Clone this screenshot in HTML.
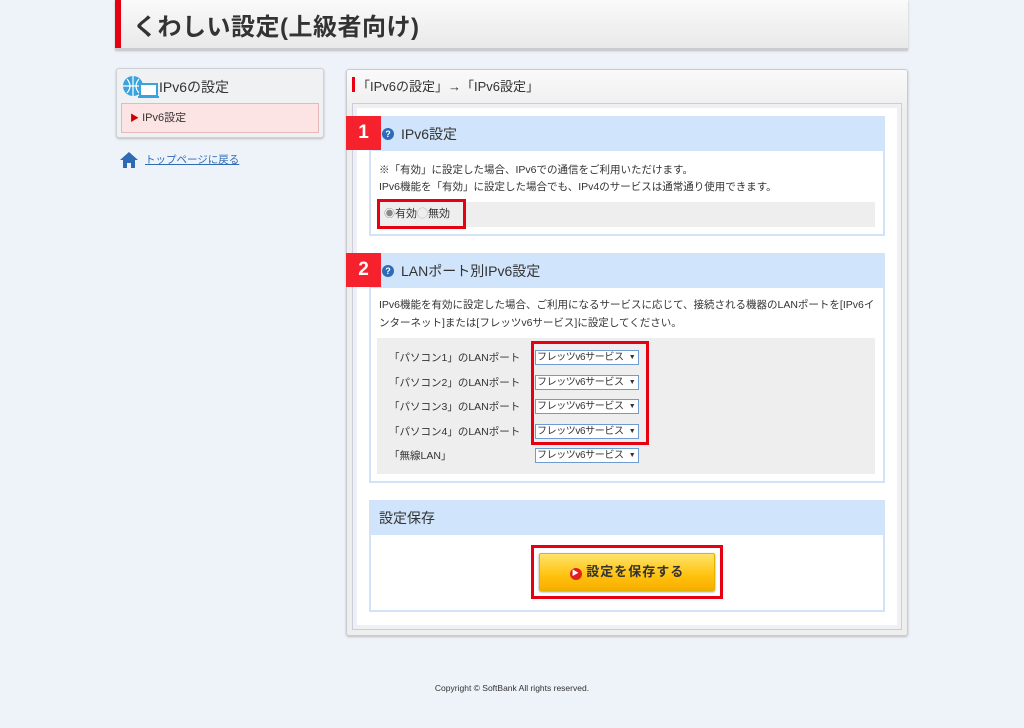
<!DOCTYPE html>
<html><head><meta charset="utf-8"><style>
*{margin:0;padding:0;box-sizing:border-box}
body{width:1024px;height:728px;background:#eef3f9;font-family:"Liberation Sans","Noto Sans CJK JP",sans-serif;color:#333;position:relative;overflow:hidden}
.a{position:absolute}
.hdr{left:115px;top:0;width:793px;height:50px;background:linear-gradient(#fafafa,#e9e9e9);border-bottom:2px solid #c9ccd0;box-shadow:0 1px 2px #bbb}
.hdr .bar{left:0;top:0;width:6px;height:48px;background:#e60012}
.hdr .t{left:18px;top:7px;font-size:24px;font-weight:bold;color:#333;letter-spacing:0.5px}
.lbox{left:116px;top:68px;width:208px;height:70px;background:#f0f1f3;border:1px solid #cdd2d8;border-radius:3px;box-shadow:0 1px 2px #bbb}
.panel{left:346px;top:69px;width:562px;height:567px;background:linear-gradient(#fafafa,#eee 40px);border:1px solid #c8ccd2;border-radius:3px;box-shadow:0 1px 2px #bbb}
.inner{left:352px;top:103px;width:550px;height:527px;background:#fff;border:1px solid #ccd;box-shadow:inset 0 0 0 4px #eef0f3}
.sec{border:2px solid #d3e3f7;background:#fff}
.sh{background:#d0e4fb;height:33px;font-size:14px;line-height:33px;color:#333}
.num{width:35px;height:34px;background:#f5222d;color:#fff;font-weight:bold;font-size:19px;text-align:center;line-height:34px}
.q{width:12px;height:12px;border-radius:50%;background:#2d6bb8;color:#fff;font-size:9px;font-weight:bold;text-align:center;line-height:12px}
.s12{font-size:10.5px;color:#333}
.sel{width:104px;height:15px;border:1px solid #6f9bd1;background:#fff;font-size:10px;letter-spacing:-0.4px;line-height:13px;padding-left:1px;white-space:nowrap;overflow:hidden}
.sel:after{content:"▼";position:absolute;right:0;top:0;width:12px;text-align:center;background:#fff;font-size:7px}
.red{border:3px solid #e60012}
</style></head><body>
<div class="a hdr"><div class="a bar"></div><div class="a t">くわしい設定(上級者向け)</div></div>

<div class="a lbox">
 <svg class="a" style="left:4px;top:4px" width="40" height="28"><circle cx="12" cy="13" r="10" fill="#3aa2dc"/><path d="M2 13h20M12 3v20M6 6q6 7 0 14M18 6q-6 7 0 14" stroke="#fff" stroke-width="1.2" fill="none"/><rect x="19" y="11" width="17" height="12" fill="#fff" stroke="#3aa2dc" stroke-width="2"/><rect x="17" y="23" width="21" height="2" fill="#3aa2dc"/></svg>
 <div class="a" style="left:42px;top:8px;font-size:14px">IPv6の設定</div>
 <div class="a" style="left:4px;top:34px;width:198px;height:30px;background:#fde4e4;border:1px solid #e3b9b9;font-size:11px;line-height:28px;padding-left:8px"><span style="color:#c00;font-size:9px">▶</span> IPv6設定</div>
</div>
<svg class="a" style="left:119px;top:151px" width="20" height="18"><path d="M10 1L1 9h3v8h4v-5h4v5h4V9h3z" fill="#2f6bb5"/></svg>
<div class="a" style="left:145px;top:152px;font-size:10.5px;color:#2f6bb5;text-decoration:underline">トップページに戻る</div>

<div class="a panel"></div>
<div class="a" style="left:352px;top:77px;width:3px;height:15px;background:#e60012"></div>
<div class="a" style="left:357px;top:76px;font-size:13px">「IPv6の設定」→「IPv6設定」</div>
<div class="a inner"></div>

<div class="a sec" style="left:369px;top:116px;width:516px;height:120px">
 <div class="sh" style="padding-left:30px">IPv6設定</div>
 <div class="a s12" style="left:8px;top:44px;line-height:17px">※「有効」に設定した場合、IPv6での通信をご利用いただけます。<br>IPv6機能を「有効」に設定した場合でも、IPv4のサービスは通常通り使用できます。</div>
 <div class="a" style="left:6px;top:84px;width:498px;height:25px;background:#eee"></div>
 <div class="a red" style="left:6px;top:81px;width:89px;height:30px;font-size:11px;line-height:24px;padding-left:4px"><span style="color:#888">◉</span>有効<span style="color:#aaa">◯</span>無効</div>
</div>
<div class="a num" style="left:346px;top:116px">1</div>
<div class="a q" style="left:382px;top:128px">?</div>

<div class="a sec" style="left:369px;top:253px;width:516px;height:230px">
 <div class="sh" style="padding-left:30px">LANポート別IPv6設定</div>
 <div class="a s12" style="left:8px;top:41px;line-height:18px">IPv6機能を有効に設定した場合、ご利用になるサービスに応じて、接続される機器のLANポートを[IPv6インターネット]または[フレッツv6サービス]に設定してください。</div>
 <div class="a" style="left:6px;top:83px;width:498px;height:136px;background:#eee"></div>
 <div class="a s12" style="left:18px;top:91px;line-height:24.6px">「パソコン1」のLANポート<br>「パソコン2」のLANポート<br>「パソコン3」のLANポート<br>「パソコン4」のLANポート<br>「無線LAN」</div>
 <div class="a sel" style="left:164px;top:95px">フレッツv6サービス</div>
 <div class="a sel" style="left:164px;top:120px">フレッツv6サービス</div>
 <div class="a sel" style="left:164px;top:144px">フレッツv6サービス</div>
 <div class="a sel" style="left:164px;top:169px">フレッツv6サービス</div>
 <div class="a sel" style="left:164px;top:193px">フレッツv6サービス</div>
 <div class="a red" style="left:160px;top:86px;width:118px;height:104px"></div>
</div>
<div class="a num" style="left:346px;top:253px">2</div>
<div class="a q" style="left:382px;top:265px">?</div>

<div class="a sec" style="left:369px;top:500px;width:516px;height:112px">
 <div class="sh" style="padding-left:8px">設定保存</div>
 <div class="a red" style="left:160px;top:43px;width:192px;height:54px"></div>
 <div class="a" style="left:168px;top:51px;width:176px;height:38px;border:1px solid #e2b400;border-radius:2px;background:linear-gradient(#ffe36b,#ffc20e 60%,#f8ad00);box-shadow:0 1px 2px #999;font-size:13px;font-weight:bold;line-height:36px;text-align:center;letter-spacing:1px;color:#333"><span style="display:inline-block;width:12px;height:12px;border-radius:50%;background:#e02020;color:#fff;font-size:7px;line-height:12px;vertical-align:1px">▶</span> 設定を保存する</div>
</div>

<div class="a" style="left:0;width:1024px;top:683px;text-align:center;font-size:8.5px;color:#333">Copyright © SoftBank All rights reserved.</div>
</body></html>
